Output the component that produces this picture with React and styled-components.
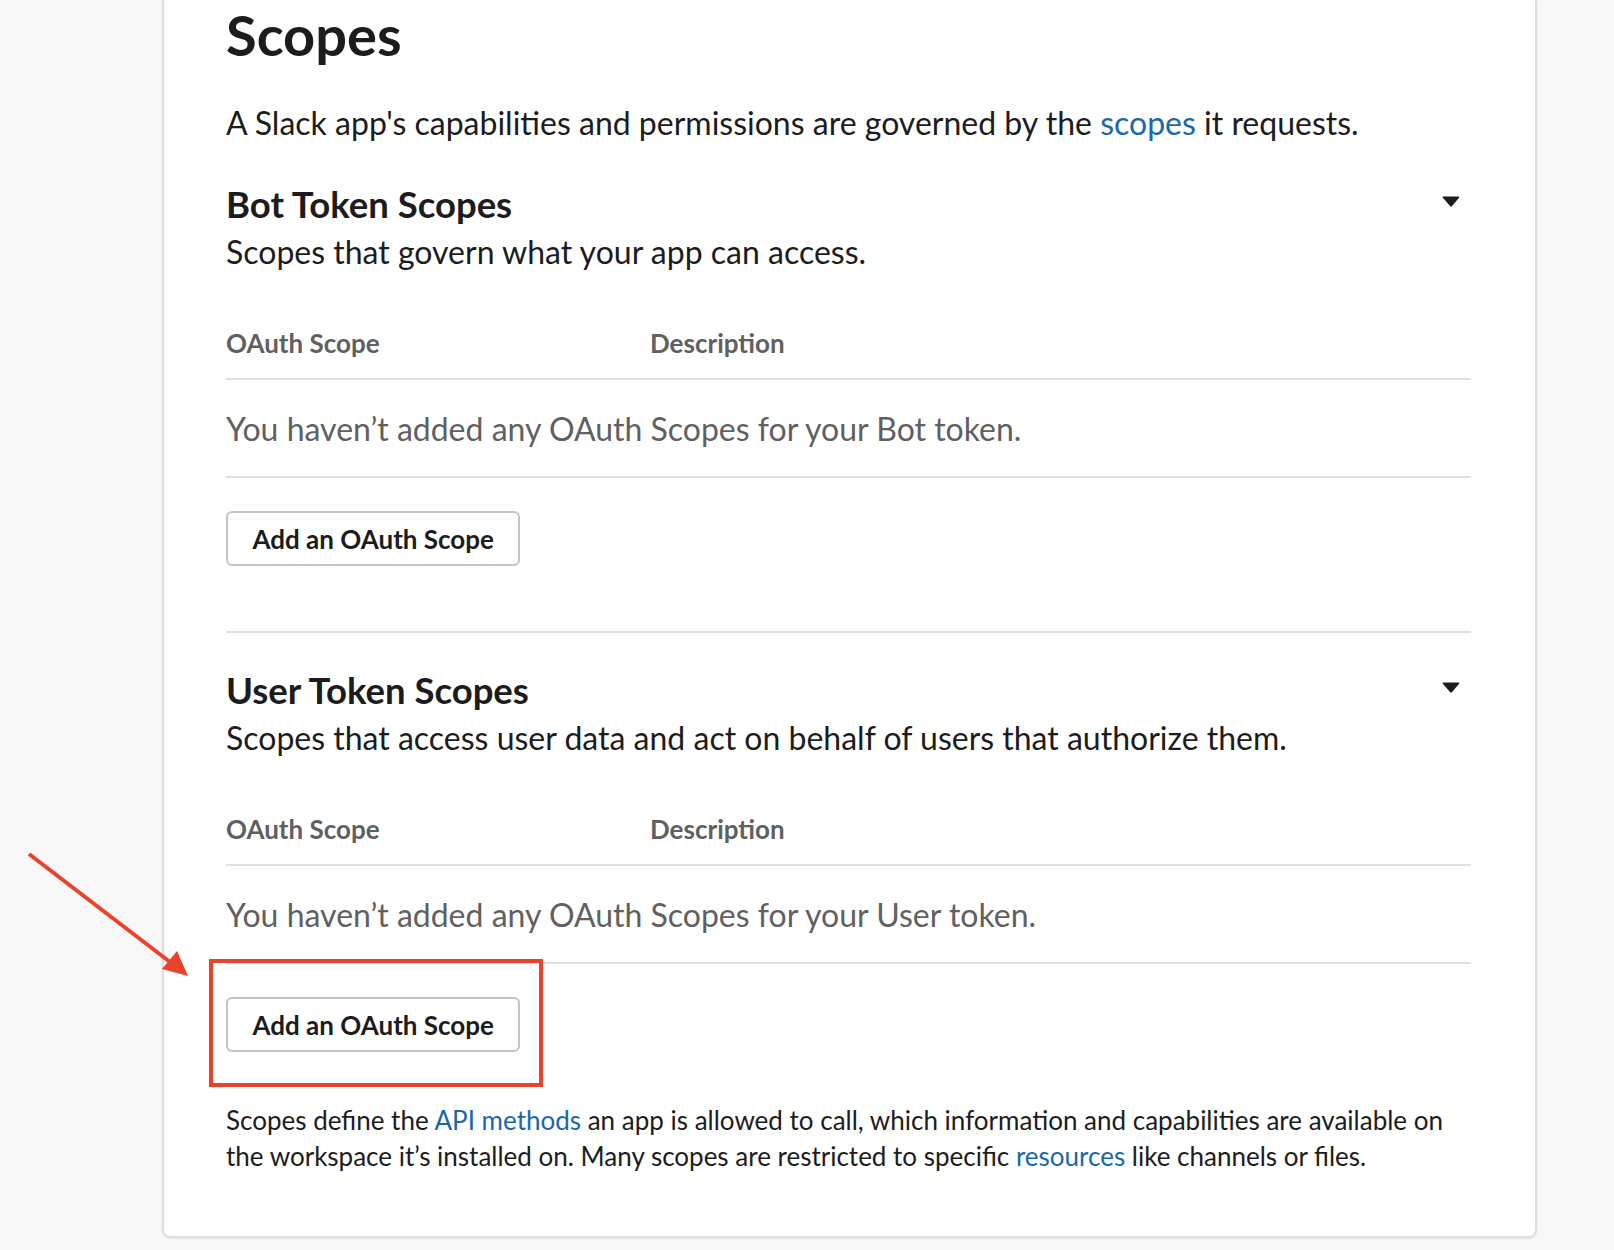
import React from "react";
import styled, { createGlobalStyle } from "styled-components";

const GlobalStyle = createGlobalStyle`
  html, body {
    margin: 0;
    padding: 0;
    background: #f8f8f8;
  }
  body {
    font-family: Lato, "Open Sans", "Liberation Sans", sans-serif;
    color: #1d1c1d;
    -webkit-font-smoothing: antialiased;
  }
`;

const Page = styled.div`
  position: relative;
  min-height: 1250px;
  padding-left: 162px;
  box-sizing: border-box;
  overflow: hidden;
`;

const Card = styled.main`
  width: 1375px;
  box-sizing: border-box;
  background: #ffffff;
  border: 2px solid #dedede;
  border-top: none;
  border-radius: 0 0 8px 8px;
  box-shadow: 0 1px 3px rgba(0, 0, 0, 0.08);
  padding: 0 64px 62px 62px;
`;

const Title = styled.h1`
  margin: 0;
  font-size: 56px;
  line-height: 70px;
  font-weight: 700;
  color: #1d1c1d;
`;

const Lead = styled.p`
  margin: 33px 0 0;
  font-size: 32px;
  line-height: 40px;
  color: #1d1c1d;
`;

const Link = styled.a`
  color: #1868ab;
  text-decoration: none;
`;

const Section = styled.section`
  padding-top: ${(p) => p.$top}px;
  padding-bottom: ${(p) => (p.$divided ? 65 : 0)}px;
  border-bottom: ${(p) => (p.$divided ? "2px solid #e0e0e0" : "none")};
`;

const HeadRow = styled.div`
  display: flex;
  justify-content: space-between;
  align-items: flex-start;
`;

const SectionTitle = styled.h2`
  margin: 0;
  font-size: 36.5px;
  line-height: 40px;
  font-weight: 700;
  color: #1d1c1d;
`;

const Caret = styled.svg`
  display: block;
  width: 18px;
  height: 11px;
  margin-top: 12px;
  margin-right: 11px;
`;

const SectionText = styled.p`
  margin: 8px 0 0;
  font-size: 32px;
  line-height: 40px;
  color: #1d1c1d;
`;

const TableHead = styled.div`
  display: grid;
  grid-template-columns: 424px 1fr;
  margin-top: 56px;
  padding-bottom: 20px;
  border-bottom: 2px solid #e0e0e0;
`;

const HeadCell = styled.span`
  font-size: 26px;
  line-height: 30px;
  font-weight: 700;
  color: #616061;
`;

const EmptyRow = styled.div`
  padding: 31px 0 29px;
  border-bottom: 2px solid #e0e0e0;
  font-size: 32px;
  line-height: 36px;
  color: #616061;
`;

const ButtonWrap = styled.div`
  position: relative;
  display: inline-block;
  margin-top: 33px;
  vertical-align: top;
`;

const Button = styled.button`
  display: block;
  height: 55px;
  box-sizing: border-box;
  padding: 0 24.5px;
  border: 2px solid #c4c4c4;
  border-radius: 6px;
  background: #ffffff;
  font-family: Lato, "Open Sans", "Liberation Sans", sans-serif;
  font-size: 26px;
  font-weight: 700;
  color: #1d1c1d;
  cursor: pointer;
`;

const Highlight = styled.div`
  position: absolute;
  left: -17px;
  top: -38px;
  right: -23px;
  bottom: -35px;
  border: 4px solid #e8432b;
  pointer-events: none;
`;

const Footnote = styled.p`
  margin: 50px 0 0;
  font-size: 26px;
  line-height: 36px;
  color: #1d1c1d;
`;

const Arrow = styled.svg`
  position: absolute;
  left: 0;
  top: 840px;
  width: 200px;
  height: 150px;
  pointer-events: none;
`;

function CaretIcon() {
  return (
    <Caret viewBox="0 0 18 11" aria-hidden="true">
      <path
        d="M1.5 1.2 H16.5 L9 10 Z"
        fill="#1d1c1d"
        stroke="#1d1c1d"
        strokeWidth="1.6"
        strokeLinejoin="round"
      />
    </Caret>
  );
}

function ScopeSection({ title, text, token, top, divided, highlight, children }) {
  return (
    <Section $top={top} $divided={divided}>
      <HeadRow>
        <SectionTitle>{title}</SectionTitle>
        <CaretIcon />
      </HeadRow>
      <SectionText>{text}</SectionText>
      <TableHead>
        <HeadCell>OAuth Scope</HeadCell>
        <HeadCell>Description</HeadCell>
      </TableHead>
      <EmptyRow>You haven’t added any OAuth Scopes for your {token} token.</EmptyRow>
      <ButtonWrap>
        <Button type="button">Add an OAuth Scope</Button>
        {highlight && <Highlight />}
      </ButtonWrap>
      {children}
    </Section>
  );
}

export default function App() {
  return (
    <>
      <GlobalStyle />
      <Page>
        <Card>
          <Title>Scopes</Title>
          <Lead>
            A Slack app's capabilities and permissions are governed by the{" "}
            <Link href="#">scopes</Link> it requests.
          </Lead>
          <ScopeSection
            title="Bot Token Scopes"
            text="Scopes that govern what your app can access."
            token="Bot"
            top={41}
            divided
          />
          <ScopeSection
            title="User Token Scopes"
            text="Scopes that access user data and act on behalf of users that authorize them."
            token="User"
            top={37}
            highlight
          >
            <Footnote>
              Scopes define the <Link href="#">API methods</Link> an app is allowed to call,
              which information and capabilities are available on the workspace it’s
              installed on. Many scopes are restricted to specific{" "}
              <Link href="#">resources</Link> like channels or files.
            </Footnote>
          </ScopeSection>
        </Card>
        <Arrow viewBox="0 0 200 150" aria-hidden="true">
          <line x1="29" y1="14" x2="170" y2="122" stroke="#e8432b" strokeWidth="4" />
          <polygon points="188,136 162,129 177,111" fill="#e8432b" />
        </Arrow>
      </Page>
    </>
  );
}
